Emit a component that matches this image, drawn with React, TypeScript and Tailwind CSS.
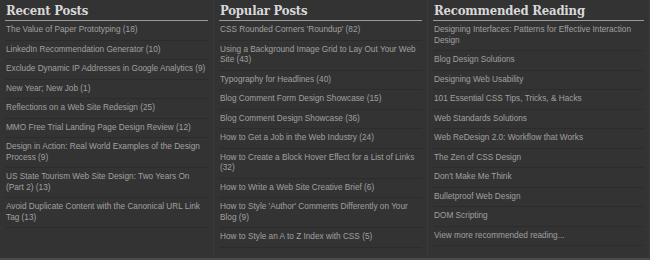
const columns = [
  {
    title: "Recent Posts",
    items: [
      "The Value of Paper Prototyping (18)",
      "LinkedIn Recommendation Generator (10)",
      "Exclude Dynamic IP Addresses in Google Analytics (9)",
      "New Year; New Job (1)",
      "Reflections on a Web Site Redesign (25)",
      "MMO Free Trial Landing Page Design Review (12)",
      "Design in Action: Real World Examples of the Design Process (9)",
      "US State Tourism Web Site Design: Two Years On (Part 2) (13)",
      "Avoid Duplicate Content with the Canonical URL Link Tag (13)",
    ],
  },
  {
    title: "Popular Posts",
    items: [
      "CSS Rounded Corners 'Roundup' (82)",
      "Using a Background Image Grid to Lay Out Your Web Site (43)",
      "Typography for Headlines (40)",
      "Blog Comment Form Design Showcase (15)",
      "Blog Comment Design Showcase (36)",
      "How to Get a Job in the Web Industry (24)",
      "How to Create a Block Hover Effect for a List of Links (32)",
      "How to Write a Web Site Creative Brief (6)",
      "How to Style 'Author' Comments Differently on Your Blog (9)",
      "How to Style an A to Z Index with CSS (5)",
    ],
  },
  {
    title: "Recommended Reading",
    items: [
      "Designing Interfaces: Patterns for Effective Interaction Design",
      "Blog Design Solutions",
      "Designing Web Usability",
      "101 Essential CSS Tips, Tricks, & Hacks",
      "Web Standards Solutions",
      "Web ReDesign 2.0: Workflow that Works",
      "The Zen of CSS Design",
      "Don't Make Me Think",
      "Bulletproof Web Design",
      "DOM Scripting",
      "View more recommended reading...",
    ],
  },
];

export default function App() {
  return (
    <div className="w-[650px] h-[260px] bg-[#333333] overflow-hidden flex flex-col">
      <div className="flex flex-1 border-r border-[#3c3c3c]">
        {columns.map((col, i) => (
          <div
            key={col.title}
            className={
              i < 2
                ? "w-[214px] px-[5px] pt-[3px] border-r border-[#3a3a3a]"
                : "flex-1 px-[5px] pt-[3px]"
            }
          >
            <h2 className="text-[#d8d8d8] text-[13px] font-bold leading-[16px] pb-[1px] border-b border-[#9a9a9a] font-['DejaVu_Serif_Condensed','DejaVu_Serif',serif] tracking-[-0.2px] pl-[1px]">
              {col.title}
            </h2>
            <ul className="font-['Liberation_Sans',sans-serif] text-[8.25px] leading-[10.5px] text-[#a0a0a0]">
              {col.items.map((item) => (
                <li key={item} className="border-b border-[#2c2c2c] py-[4px] pl-[1px]">
                  {item}
                </li>
              ))}
            </ul>
          </div>
        ))}
      </div>
      <div className="h-[2px] bg-[#4a4a4a]" />
    </div>
  );
}
